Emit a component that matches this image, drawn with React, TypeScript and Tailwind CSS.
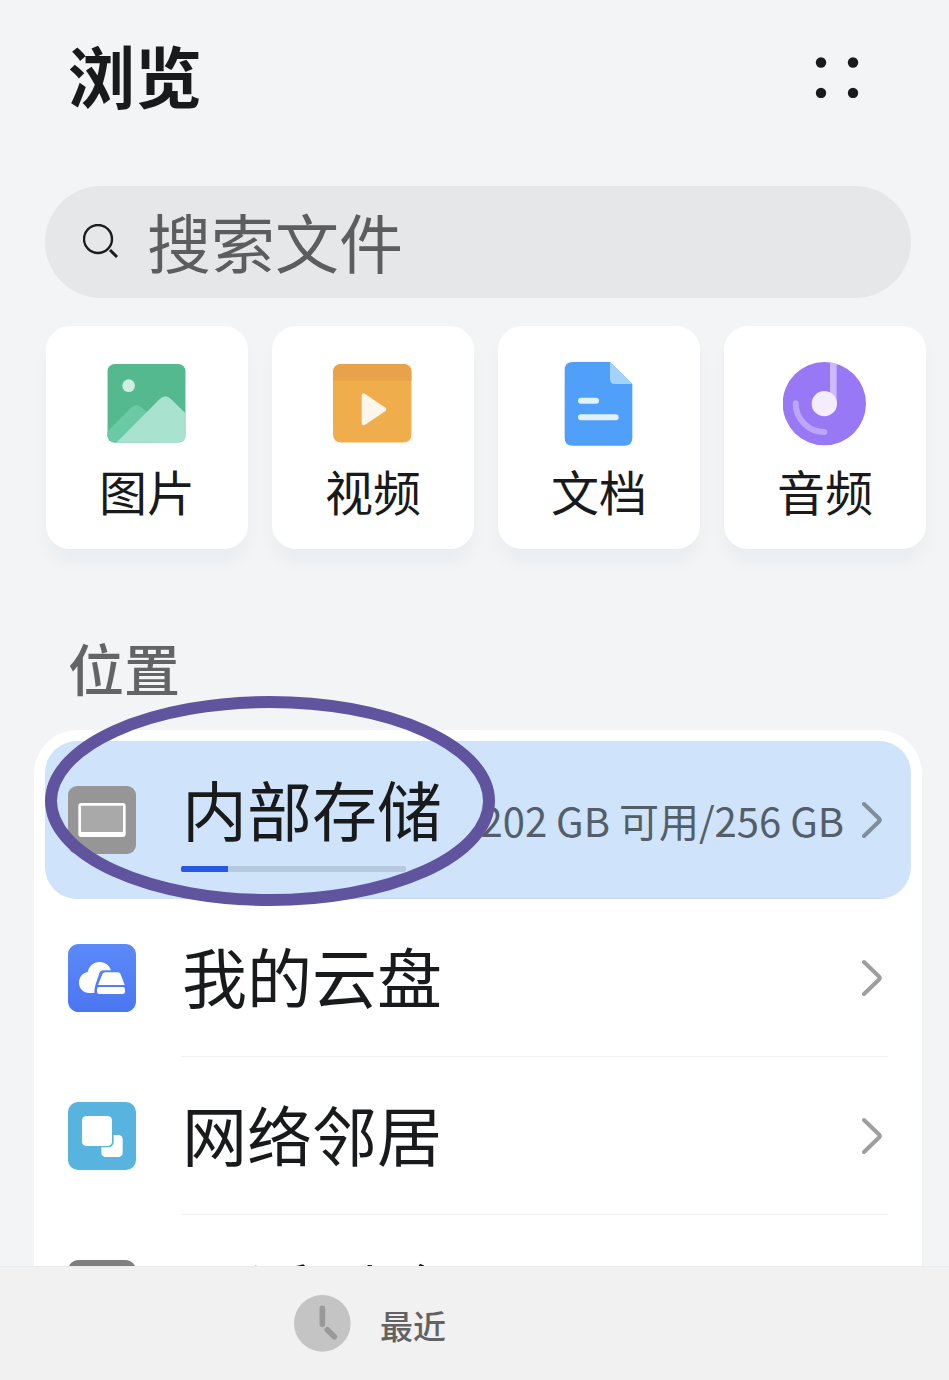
import React from "react";
import clsx from "clsx";

interface Category {
    label: string;
    icon: React.ReactNode;
}

interface Place {
    name: string;
    icon: React.ReactNode;
    detail?: string;
    usedPercent?: number;
    active?: boolean;
}

const ImageIcon = () => (
    <svg viewBox="0 0 252 252" className="size-[84px]" aria-hidden="true">
        <clipPath id="image-frame">
            <rect x="7" y="6" width="235" height="236" rx="22" />
        </clipPath>
        <g clipPath="url(#image-frame)">
            <rect x="7" y="6" width="235" height="236" fill="#55b98f" />
            <circle cx="71" cy="71" r="19" fill="#cdeee0" />
            <path d="M0 216 L80 136 Q93 124 107 134 L140 162 V252 H0 Z" fill="#6bc9a6" />
            <path d="M24 252 L165 110 Q181 95 197 110 L252 164 V252 Z" fill="#a9e2cf" />
        </g>
    </svg>
);

const VideoIcon = () => (
    <svg viewBox="0 0 252 252" className="size-[84px]" aria-hidden="true">
        <clipPath id="video-frame">
            <rect x="6" y="6" width="236" height="236" rx="24" />
        </clipPath>
        <g clipPath="url(#video-frame)">
            <rect x="6" y="6" width="236" height="236" fill="#f0ad4b" />
            <rect x="6" y="6" width="236" height="50" fill="#e8a24a" />
        </g>
        <path
            d="M98 100 V184 L160 142 Z"
            fill="#fdf6ec"
            stroke="#fdf6ec"
            strokeWidth="12"
            strokeLinejoin="round"
        />
    </svg>
);

const DocumentIcon = () => (
    <svg viewBox="0 0 252 252" className="size-[84px]" aria-hidden="true">
        <path
            d="M47 0 H159 L226 66 V227 Q226 251 202 251 H47 Q23 251 23 227 V24 Q23 0 47 0 Z"
            fill="#509ff9"
        />
        <path d="M159 0 L226 66 H173 Q159 66 159 52 Z" fill="#a3d2fb" />
        <path d="M72 116 H117 M72 166 H176" stroke="#e1f2ff" strokeWidth="18" strokeLinecap="round" />
    </svg>
);

const AudioIcon = () => (
    <svg viewBox="0 0 252 252" className="size-[84px]" aria-hidden="true">
        <circle cx="124" cy="125" r="125" fill="#9878f5" />
        <path d="M141 1 Q152 3 161 6 V125 H141 Z" fill="#cdb9fb" />
        <path
            d="M38 124 A86 86 0 0 0 124 210"
            fill="none"
            stroke="#bda5f9"
            strokeWidth="18"
            strokeLinecap="round"
        />
        <circle cx="124" cy="125" r="38" fill="#f3edff" />
    </svg>
);

const DeviceIcon = () => (
    <svg viewBox="0 0 204 204" className="size-[68px]" aria-hidden="true">
        <rect width="204" height="204" rx="27" fill="#969696" />
        <rect x="31" y="51" width="142" height="102" rx="9" fill="#fff" />
        <rect x="39" y="59" width="126" height="79" rx="2" fill="#a9a9a9" />
    </svg>
);

const CloudIcon = () => (
    <svg viewBox="0 0 204 204" className="size-[68px]" aria-hidden="true">
        <linearGradient id="cloud-bg" x1="0" y1="0" x2="0" y2="1">
            <stop offset="0" stopColor="#5b8af8" />
            <stop offset="1" stopColor="#4b76f2" />
        </linearGradient>
        <rect width="204" height="204" rx="32" fill="url(#cloud-bg)" />
        <path
            d="M64 147 C46 147 33 133 33 116 C33 99 44 87 59 84 C63 66 77 54 94 54 C110 54 124 63 129 79 H106 Q97 79 94 88 L82 124 Q79 134 79 147 Z"
            fill="#fff"
        />
        <path d="M112 85 H149 Q156 85 158 91 L170 123 H90 L103 91 Q105 85 112 85 Z" fill="#fff" />
        <rect x="87" y="129" width="84" height="21" rx="7" fill="#fff" />
    </svg>
);

const NetworkIcon = () => (
    <svg viewBox="0 0 204 204" className="size-[68px]" aria-hidden="true">
        <rect width="204" height="204" rx="30" fill="#58b4df" />
        <rect x="100" y="99" width="64" height="66" rx="13" fill="#fff" />
        <rect x="38" y="38" width="99" height="98" rx="16" fill="#58b4df" />
        <rect x="42" y="42" width="90" height="90" rx="13" fill="#fff" />
    </svg>
);

const TrashIcon = () => (
    <svg viewBox="0 0 204 204" className="size-[68px]" aria-hidden="true">
        <rect width="204" height="204" rx="32" fill="#808080" />
        <path
            d="M48 66 H156 M82 66 V48 H122 V66 M62 66 L70 158 H134 L142 66"
            fill="none"
            stroke="#fff"
            strokeWidth="10"
        />
    </svg>
);

const ClockIcon = () => (
    <svg viewBox="0 0 171 171" className="size-[57px]" aria-hidden="true">
        <circle cx="85" cy="85" r="85" fill="#c4c4c4" />
        <path
            d="M85 40 V88 M100 104 L121 125"
            stroke="#999"
            strokeWidth="17"
            strokeLinecap="round"
        />
    </svg>
);

const SearchIcon = () => (
    <svg viewBox="0 0 36 36" className="size-9 shrink-0" fill="none" stroke="#1b1c1d" aria-hidden="true">
        <circle cx="15" cy="15" r="14" strokeWidth="2.4" />
        <path d="M27 26 L34 33" strokeWidth="3" />
    </svg>
);

const Chevron = () => (
    <svg viewBox="0 0 20 40" className="h-10 w-5 shrink-0" fill="none" aria-hidden="true">
        <path
            d="M2 4 L17 18.500 Q18.500 20 17 21.500 L2 36"
            stroke="#000"
            strokeOpacity="0.38"
            strokeWidth="4"
            strokeLinecap="round"
        />
    </svg>
);

// Hand-drawn style ring that points out the storage entry
const Highlight = () => (
    <svg
        viewBox="0 0 450 210"
        className="pointer-events-none absolute left-0 -top-[45px] h-[210px] w-[450px]"
        fill="none"
        aria-hidden="true"
    >
        <ellipse cx="225" cy="105" rx="219" ry="99" stroke="#5f549d" strokeWidth="12" />
    </svg>
);

const categories: Category[] = [
    { label: "图片", icon: <ImageIcon /> },
    { label: "视频", icon: <VideoIcon /> },
    { label: "文档", icon: <DocumentIcon /> },
    { label: "音频", icon: <AudioIcon /> },
];

const places: Place[] = [
    {
        name: "内部存储",
        icon: <DeviceIcon />,
        detail: "202 GB 可用/256 GB",
        usedPercent: 21,
        active: true,
    },
    { name: "我的云盘", icon: <CloudIcon /> },
    { name: "网络邻居", icon: <NetworkIcon /> },
    { name: "最近删除", icon: <TrashIcon /> },
];

const PlaceRow = ({ place }: { place: Place }) => {
    const hasUsage = place.usedPercent !== undefined;

    return (
        <li className="relative">
            <button
                type="button"
                className={clsx(
                    "flex h-[158px] w-full items-center gap-[45px] rounded-[32px] px-[23px] text-left",
                    place.active && "bg-[#cfe4fb]"
                )}
            >
                <span className="shrink-0">{place.icon}</span>
                <span className="flex h-full min-w-0 flex-1 items-center justify-between border-b border-black/5 pr-1.5">
                    <span className={clsx("flex shrink-0 flex-col", hasUsage ? "gap-[18px]" : "pb-1.5")}>
                        <span className="pl-px text-[65px] leading-[80px] whitespace-nowrap text-[#191a1b]">
                            {place.name}
                        </span>
                        {hasUsage && (
                            <span className="block h-1.5 w-[225px] overflow-hidden rounded-xs bg-[#b5c9df]">
                                <span
                                    className="block h-full bg-[#2659e6]"
                                    style={{ width: `${place.usedPercent}%` }}
                                />
                            </span>
                        )}
                    </span>
                    <span className="flex items-center gap-[18px]">
                        {place.detail && (
                            <span className="text-[40px] leading-[48px] whitespace-nowrap text-[#535e69]">
                                {place.detail}
                            </span>
                        )}
                        <Chevron />
                    </span>
                </span>
            </button>
            {place.active && <Highlight />}
        </li>
    );
};

export default function App() {
    return (
        <div className="flex h-screen flex-col bg-[#f2f4f6] font-['Noto_Sans_CJK_SC',sans-serif] text-[#191a1b]">
            <main className="min-h-0 flex-1 overflow-hidden">
                <header className="flex items-center justify-between pt-[34px] pr-[83px] pl-[68px]">
                    <h1 className="text-[67px] leading-[80px] font-bold">浏览</h1>
                    <button type="button" aria-label="更多" className="p-1">
                        <svg viewBox="0 0 48 48" className="size-12" fill="#191a1b" aria-hidden="true">
                            <circle cx="7" cy="12.500" r="5.200" />
                            <circle cx="39" cy="12.500" r="5.200" />
                            <circle cx="7" cy="43" r="5.200" />
                            <circle cx="39" cy="43" r="5.200" />
                        </svg>
                    </button>
                </header>

                <label className="mt-[72px] mr-[38px] ml-[45px] flex h-28 items-center gap-7 rounded-full bg-[#e6e7e9] px-[38px]">
                    <SearchIcon />
                    <input
                        type="search"
                        aria-label="搜索文件"
                        placeholder="搜索文件"
                        className="h-24 min-w-0 flex-1 bg-transparent pb-1 text-[64px] outline-none placeholder:text-[#5c5d5e]"
                    />
                </label>

                <nav className="mt-7 grid grid-cols-4 gap-6 pr-[23px] pl-[46px]">
                    {categories.map((category) => (
                        <button
                            key={category.label}
                            type="button"
                            className="flex flex-col items-center gap-3 rounded-3xl bg-white pt-9 pb-[27px] shadow-[0_14px_16px_rgba(30,50,50,0.03)]"
                        >
                            {category.icon}
                            <span className="text-[48px] leading-[64px]">{category.label}</span>
                        </button>
                    ))}
                </nav>

                <section>
                    <h2 className="mt-[82px] mb-[27px] pl-[68px] text-[56px] leading-[72px] font-medium text-[#626466]">
                        位置
                    </h2>
                    <ul className="mr-[27px] ml-[34px] rounded-[44px] bg-white p-[11px]">
                        {places.map((place) => (
                            <PlaceRow key={place.name} place={place} />
                        ))}
                    </ul>
                </section>
            </main>

            <footer className="h-[114px] shrink-0 border-t border-[#eaebec] bg-[#f1f1f1]">
                <div className="flex h-full w-[78%] items-center justify-center">
                    <button type="button" className="flex items-center gap-[29px]">
                        <ClockIcon />
                        <span className="pt-0.5 text-[33px] leading-[40px] font-medium text-[#626262]">最近</span>
                    </button>
                </div>
            </footer>
        </div>
    );
}
